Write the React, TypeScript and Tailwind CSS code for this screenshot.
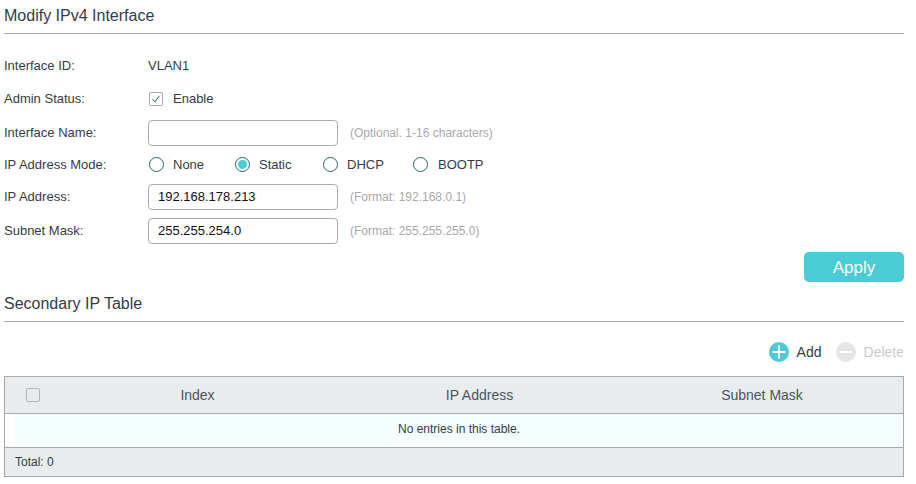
import React from "react";

const labelClass = "w-[144px] shrink-0";

function Radio({ label, checked, className, gap = "ml-[9px]" }: { label: string; checked?: boolean; className: string; gap?: string }) {
  return (
    <div className={`flex items-center ${className}`}>
      <span className="flex h-[15px] w-[15px] shrink-0 items-center justify-center rounded-full border border-[#1f6670] bg-white">
        {checked && <span className="h-[9px] w-[9px] rounded-full bg-[#4acbd6]" />}
      </span>
      <span className={`pt-[1px] ${gap}`}>{label}</span>
    </div>
  );
}

function Field({ label, value, hint, className }: { label: string; value: string; hint: string; className: string }) {
  return (
    <div className={`flex h-[26px] items-center ${className}`}>
      <div className={labelClass}>{label}</div>
      <div className="flex h-[26px] w-[190px] items-center rounded-[4px] border border-[#a7a9ac] bg-white pl-[9px] text-[#111]">
        {value}
      </div>
      <div className="ml-3 text-xs text-[#a7a9ac]">{hint}</div>
    </div>
  );
}

function CircleIcon({ color, plus }: { color: string; plus?: boolean }) {
  return (
    <svg width="20" height="20" viewBox="0 0 20 20">
      <circle cx="10" cy="10" r="10" fill={color} />
      <rect x="3.5" y="9" width="13" height="2" fill="#fff" />
      {plus && <rect x="9" y="3.5" width="2" height="13" fill="#fff" />}
    </svg>
  );
}

export default function App() {
  return (
    <div className="h-[484px] w-[916px] overflow-hidden bg-white pl-1 pr-3 font-['Liberation_Sans',Arial,sans-serif] text-[13px] text-[#333c47]">
      <div className="flex h-[34px] items-end border-b border-[#a7a9ac] pb-[7px] text-base leading-5">
        Modify IPv4 Interface
      </div>

      <div className="flex flex-col">
        <div className="mt-[19px] flex h-[26px] items-center">
          <div className={labelClass}>Interface ID:</div>
          <div>VLAN1</div>
        </div>
        <div className="mt-[7px] flex h-[26px] items-center">
          <div className={labelClass}>Admin Status:</div>
          <span className="ml-[1px] flex h-[14px] w-[14px] items-center justify-center rounded-[2px] border border-[#a7a9ac]">
            <svg width="10" height="10" viewBox="0 0 10 10" fill="none" stroke="#1f6670" strokeWidth="1">
              <path d="M1.5 5.2 L4 7.8 L8.5 1.8" />
            </svg>
          </span>
          <span className="ml-[10px]">Enable</span>
        </div>
        <div className="mt-[8px] flex h-[26px] items-center">
          <div className={labelClass}>Interface Name:</div>
          <div className="h-[26px] w-[190px] rounded-[4px] border border-[#a7a9ac] bg-white" />
          <div className="ml-3 text-xs text-[#a7a9ac]">(Optional. 1-16 characters)</div>
        </div>
        <div className="mt-[5px] flex h-[26px] items-center">
          <div className={`${labelClass} pt-[1px]`}>IP Address Mode:</div>
          <Radio label="None" className="ml-[1px] w-[86px]" />
          <Radio label="Static" checked className="w-[88px]" />
          <Radio label="DHCP" className="w-[90px]" />
          <Radio label="BOOTP" className="" gap="ml-[10px]" />
        </div>
        <Field label="IP Address:" value="192.168.178.213" hint="(Format: 192.168.0.1)" className="mt-[7px]" />
        <Field label="Subnet Mask:" value="255.255.254.0" hint="(Format: 255.255.255.0)" className="mt-[8px]" />
      </div>

      <div className="mt-[8px] flex justify-end">
        <button className="h-[30px] w-[100px] rounded-[5px] bg-[#4acbd6] pt-[1px] text-[17px] text-white">Apply</button>
      </div>

      <div className="mt-[10px] flex h-[30px] items-end border-b border-[#a7a9ac] pb-[7px] text-base leading-5">
        Secondary IP Table
      </div>

      <div className="mt-[20px] flex h-[20px] items-center justify-end text-[14px]">
        <CircleIcon color="#4acbd6" plus />
        <span className="ml-[8px]">Add</span>
        <span className="ml-[14px]">
          <CircleIcon color="#e3e5e7" />
        </span>
        <span className="ml-[8px] text-[#c9cbcd]">Delete</span>
      </div>

      <div className="mt-[14px] border border-[#a7a9ac] text-[14px]">
        <div className="flex h-[37px] items-center border-b border-[#a7a9ac] bg-[#e9ecee] text-[#4a5560]">
          <div className="flex w-[45px] shrink-0 justify-center pl-[10px]">
            <span className="h-[14px] w-[14px] rounded-[2px] border border-[#b4b6b8]" />
          </div>
          <div className="w-[295px] text-center">Index</div>
          <div className="w-[269px] text-center">IP Address</div>
          <div className="flex-1 pl-[7px] text-center">Subnet Mask</div>
        </div>
        <div className="h-[34px] border-b border-[#a7a9ac] bg-white pl-[10px]">
          <div className="flex h-full items-center justify-center bg-[#f4fefd] pb-[3px] text-xs">
            No entries in this table.
          </div>
        </div>
        <div className="flex h-[28px] items-center bg-[#e9ecee] pl-[10px] text-xs">Total: 0</div>
      </div>
    </div>
  );
}
